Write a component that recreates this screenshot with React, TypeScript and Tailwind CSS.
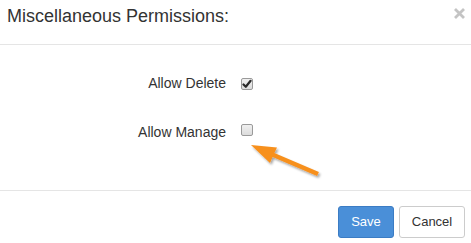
import React from "react";

function Check({ checked }: { checked?: boolean }) {
  return (
    <div className="w-[12px] h-[12px] rounded-[2px] border border-[#9a9a9a] bg-gradient-to-b from-[#f0f0f0] to-[#dcdcdc] flex items-center justify-center">
      {checked && (
        <svg width="10" height="10" viewBox="0 0 10 10">
          <path d="M1.5 5.5 L3.8 7.8 L8.6 1.8" fill="none" stroke="#2a2a2a" strokeWidth="2.2" strokeLinecap="round" strokeLinejoin="round" />
        </svg>
      )}
    </div>
  );
}

export default function App() {
  return (
    <div className="relative w-[471px] h-[243px] bg-white overflow-hidden text-[#333]" style={{ fontFamily: '"Liberation Sans", Arial, sans-serif' }}>
      <div className="h-[45px] border-b border-[#e5e5e5] flex items-start justify-between">
        <div className="pl-[7px] pt-[6px] text-[18px] leading-[20px] text-[#333]">Miscellaneous Permissions:</div>
        <svg className="mt-[8px] mr-[6px]" width="11" height="11" viewBox="0 0 11 11">
          <path d="M1 1 L10 10 M10 1 L1 10" stroke="#c4c4c4" strokeWidth="2.8" strokeLinecap="butt" />
        </svg>
      </div>
      <div className="h-[146px] border-b border-[#e5e5e5] pt-[21px] flex flex-col gap-[15px]">
        <div className="flex items-start h-[34px]">
          <div className="w-[226px] text-right pt-[7px] text-[14px] leading-[20px]">Allow Delete</div>
          <div className="ml-[15px] mt-[12px]"><Check checked /></div>
        </div>
        <div className="flex items-start h-[34px]">
          <div className="w-[226px] text-right pt-[7px] text-[14px] leading-[20px]">Allow Manage</div>
          <div className="ml-[15px] mt-[9px]"><Check /></div>
        </div>
      </div>
      <div className="flex justify-end gap-[5px] pt-[15px] pr-[6px]">
        <button className="h-[32px] w-[56px] rounded-[3px] bg-[#4a8fd8] border border-[#3b7cc4] text-white text-[13px] leading-[18px]">Save</button>
        <button className="h-[32px] w-[66px] rounded-[3px] bg-white border border-[#cccccc] text-[#333] text-[13px] leading-[18px]">Cancel</button>
      </div>
      <svg className="absolute left-0 top-0 pointer-events-none" width="471" height="243" viewBox="0 0 471 243">
        <defs>
          <filter id="sh" x="-20%" y="-20%" width="140%" height="160%">
            <feDropShadow dx="1.5" dy="2" stdDeviation="1.3" floodColor="#000" floodOpacity="0.35" />
          </filter>
        </defs>
        <g filter="url(#sh)">
          <path d="M251 145 L277 147.5 L274.4 153 L318.9 172 L317.1 176 L272.6 157 L270 163 Z" fill="#f7901e" />
        </g>
      </svg>
    </div>
  );
}
